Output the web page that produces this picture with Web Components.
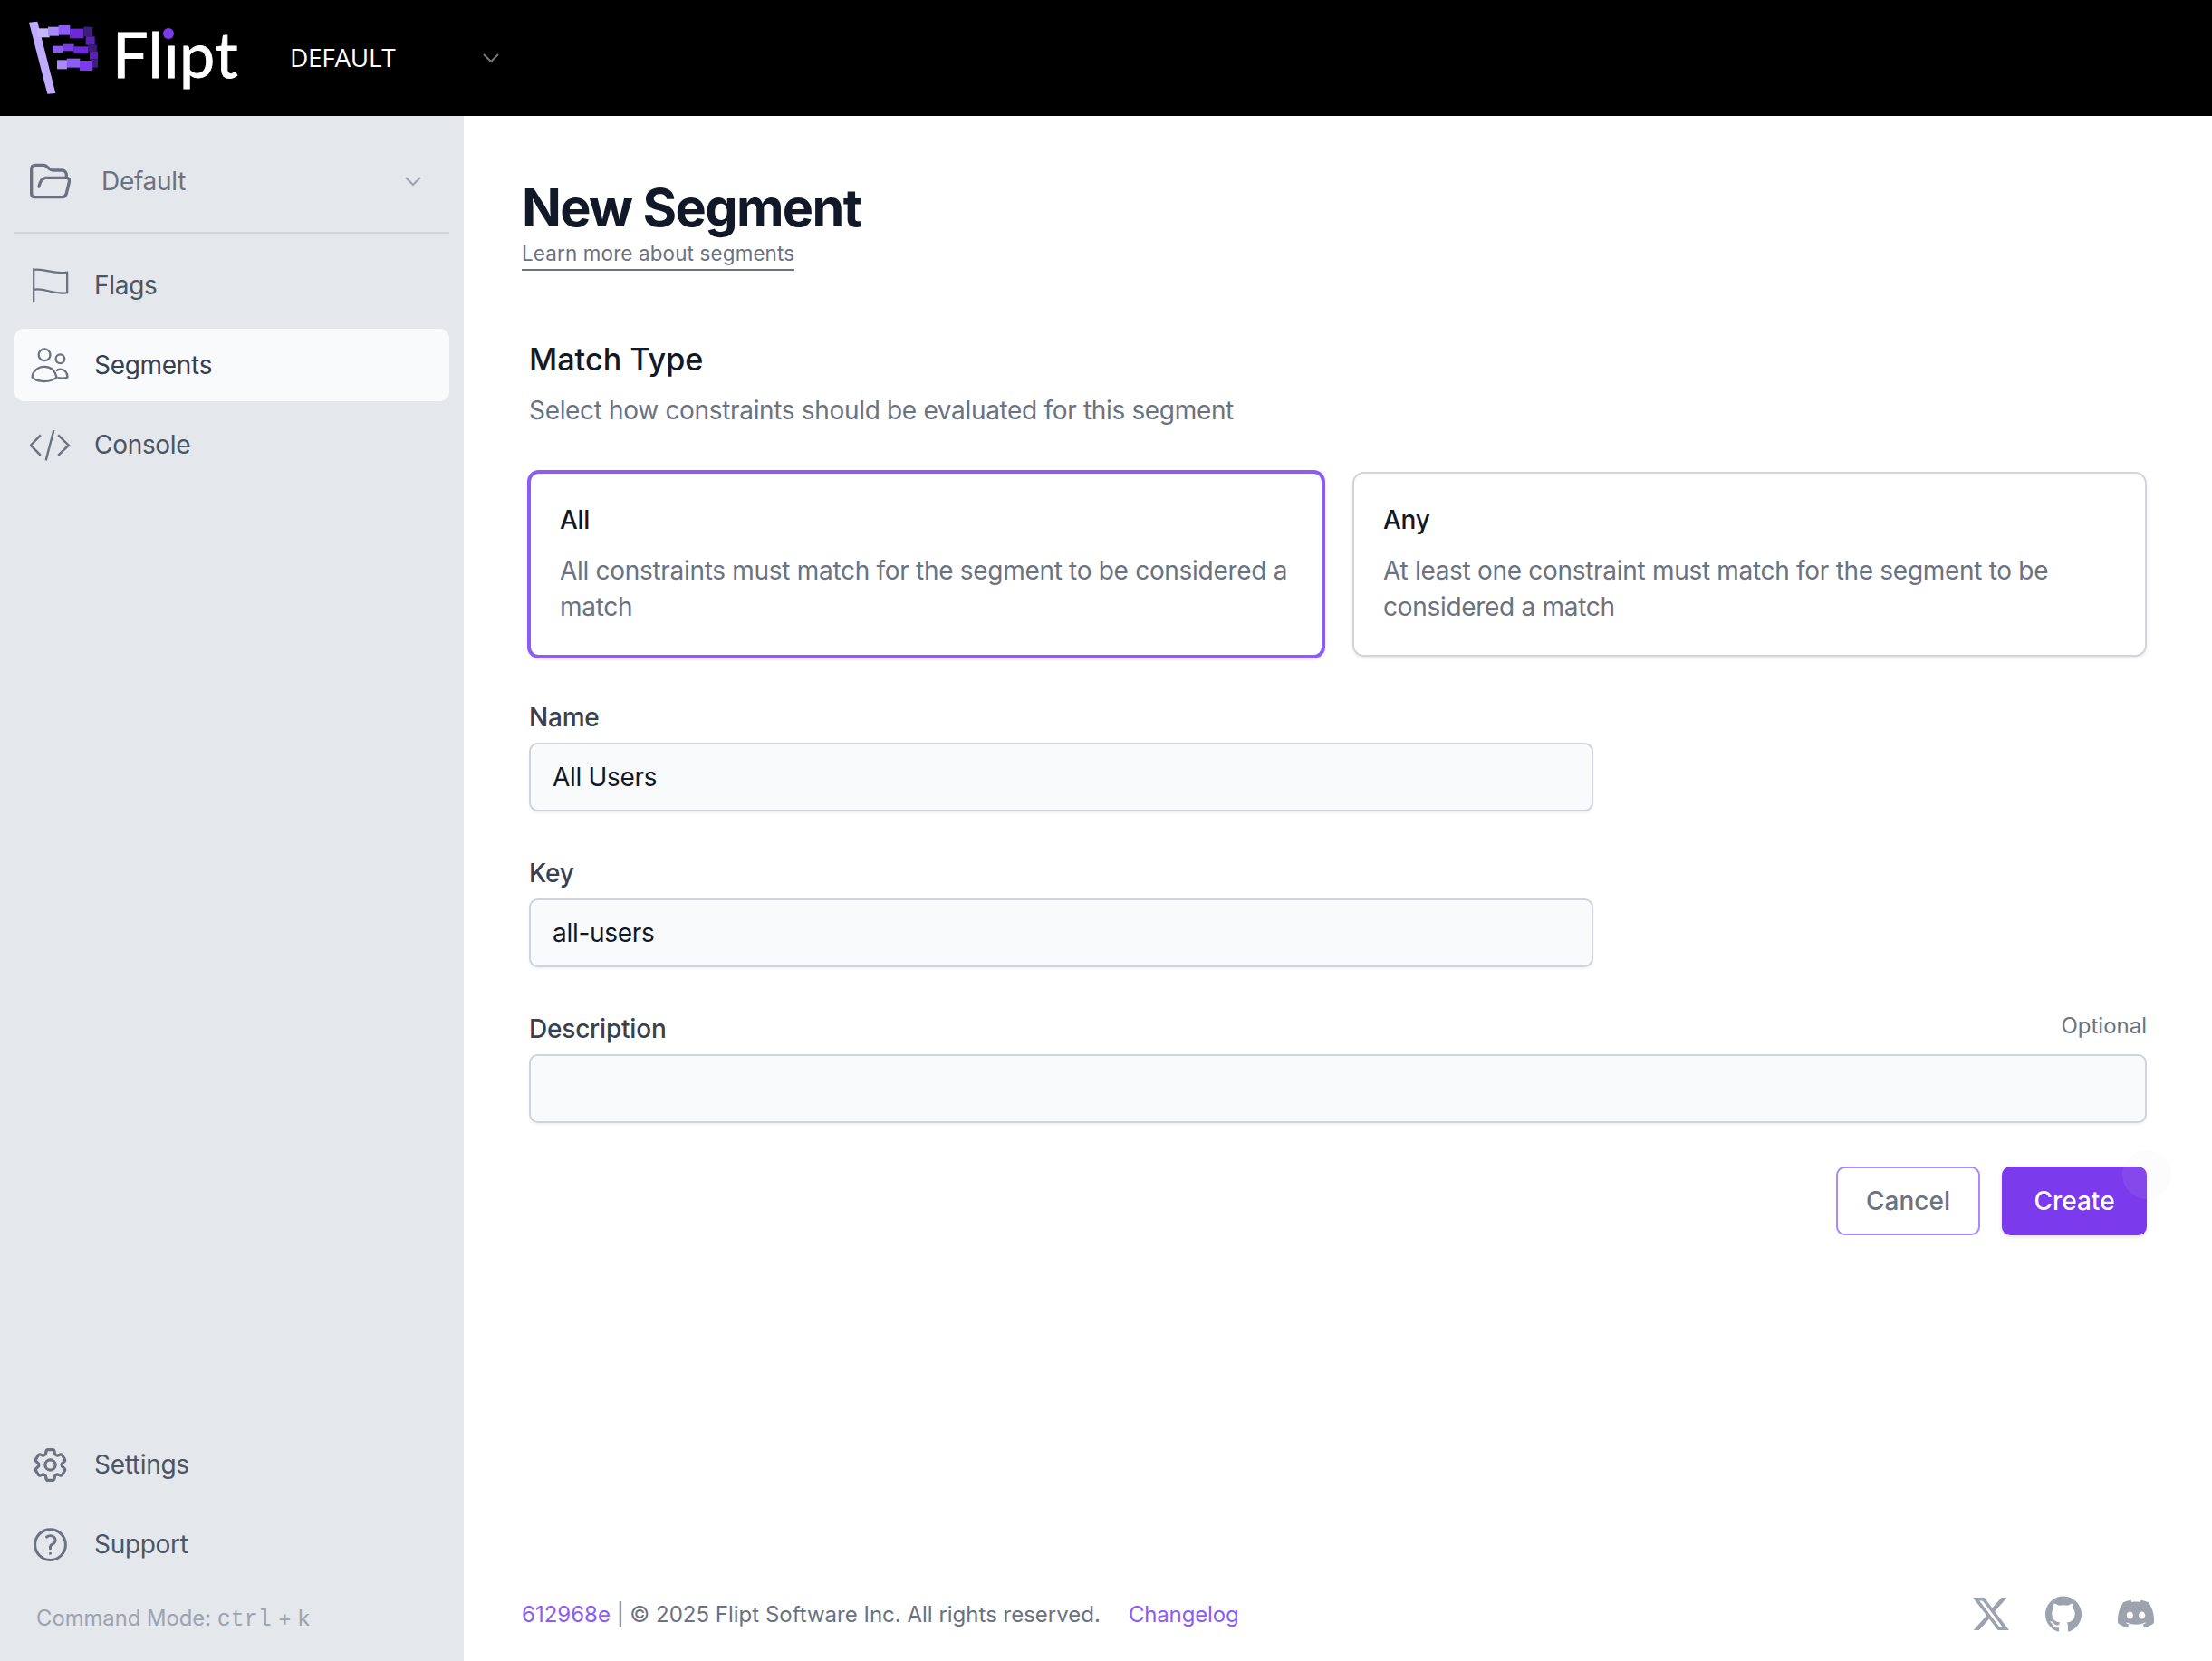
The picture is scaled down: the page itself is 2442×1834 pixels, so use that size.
<!DOCTYPE html>
<html lang="en">
<head>
<meta charset="utf-8">
<title>Flipt - New Segment</title>
<style>
  html, body { margin: 0; height: 100%; background: #fff; }
  body { font-family: Inter, "Liberation Sans", sans-serif; }
</style>
</head>
<body>
<flipt-app>
  <flipt-header slot="header"></flipt-header>
  <flipt-sidebar slot="sidebar">
    <nav-item slot="top" icon="flag">Flags</nav-item>
    <nav-item slot="top" icon="users" active>Segments</nav-item>
    <nav-item slot="top" icon="code">Console</nav-item>
    <nav-item slot="bottom" icon="cog">Settings</nav-item>
    <nav-item slot="bottom" icon="help">Support</nav-item>
  </flipt-sidebar>
  <segment-form slot="main"></segment-form>
  <flipt-footer slot="footer"></flipt-footer>
</flipt-app>

<script>
class FliptApp extends HTMLElement {
  constructor() {
    super();
    this.attachShadow({ mode: "open" });
    this.shadowRoot.innerHTML = `
      <style>
        :host { display: flex; flex-direction: column; height: 1834px; }
        .body { flex: 1; display: flex; min-height: 0; }
        .main { flex: 1; display: flex; flex-direction: column; min-width: 0; }
        .content { flex: 1; }
      </style>
      <slot name="header"></slot>
      <div class="body">
        <slot name="sidebar"></slot>
        <div class="main">
          <div class="content"><slot name="main"></slot></div>
          <slot name="footer"></slot>
        </div>
      </div>
    `;
  }
}

class FliptHeader extends HTMLElement {
  constructor() {
    super();
    this.attachShadow({ mode: "open" });
    this.shadowRoot.innerHTML = `
      <style>
        :host { display: flex; align-items: center; height: 128px; background: #000; color: #fff; padding-left: 28px; }
        .logo { display: block; width: 80px; height: 82px; flex: none; }
        .word { position: relative; margin-left: 16px; width: 138px; flex: none; font: 400 70px/1 Lato, sans-serif; -webkit-text-stroke: .9px #fff; letter-spacing: .6px; margin-top: -10px; }
        .dot { position: absolute; left: 56px; top: 7px; width: 12px; height: 12px; border-radius: 50%; background: #7c3aed; box-shadow: 0 0 0 4px #000; }
        .env { margin-left: 58px; width: 180px; flex: none; font: 400 28px/1 "Open Sans", sans-serif; letter-spacing: -.3px; margin-top: -2px; }
        svg.chev { width: 24px; height: 24px; fill: none; stroke: #777; stroke-width: 2; margin-left: 30px; }
      </style>
      <svg class="logo" viewBox="0 0 80 82"></svg>
      <div class="word">Flipt<span class="dot"></span></div>
      <div class="env">DEFAULT</div>
      <svg class="chev" viewBox="0 0 24 24"><path d="M4 8l8 8 8-8"/></svg>
    `;
    // logo squares: x, y, w, h, colour, in the 100px crop units
    const blocks = [
      [65,65,40,30,"#c4b5fd"],[100,60,36,30,"#a78bfa"],[135,55,38,32,"#8b5cf6"],[172,66,46,32,"#6d28d9"],[218,60,30,32,"#3b1f7a"],
      [225,92,30,28,"#5b21b6"],[232,120,30,22,"#3b1a75"],[238,142,30,26,"#5b21b6"],[245,168,26,27,"#3b1f7a"],
      [115,123,34,22,"#8b5cf6"],[148,117,38,23,"#7c3aed"],[185,125,47,23,"#6d28d9"],
      [130,170,33,30,"#a78bfa"],[162,165,44,30,"#8b5cf6"],[205,172,43,33,"#7c3aed"]
    ];
    const svg = this.shadowRoot.querySelector(".logo");
    svg.innerHTML = `<g transform="scale(.3333) translate(-25,-40)">
      <polygon points="37,45 65,42 125,280 98,282" fill="#bfabff"/>
      ${blocks.map(b => `<rect x="${b[0]}" y="${b[1]}" width="${b[2]}" height="${b[3]}" fill="${b[4]}"/>`).join("")}
    </g>`;
  }
}

const ICONS = {
  flag: `<svg viewBox="100 485 140 135" fill="none" stroke="#6b7280" stroke-width="7" stroke-linejoin="round" stroke-linecap="round"><path d="M113 495v113M113 498c40-6 70 18 115 8v70c-45 10-75-18-115-10"/></svg>`,
  users: `<svg viewBox="100 750 140 135" fill="none" stroke="#6b7280" stroke-width="7"><circle cx="150" cy="781" r="20"/><circle cx="204" cy="795" r="15"/><path d="M108 858c0-18 18-36 42-36s36 14 42 36c-8 8-24 14-42 14s-34-4-42-14z"/><path d="M190 836c4-4 10-6 14-6 14 0 25 12 25 28-10 4-24 4-34 2"/></svg>`,
  code: `<svg viewBox="100 1012 140 135" fill="none" stroke="#6b7280" stroke-width="7.5"><path d="M137 1045l-34 35 34 35M197 1045l36 35-36 35M182 1028l-27 104"/></svg>`,
  cog: `<svg viewBox="0 0 24 24" fill="none" stroke="#6b7280" stroke-width="1.7" stroke-linejoin="round"><path d="M9.594 3.94c.09-.542.56-.94 1.11-.94h2.593c.55 0 1.02.398 1.11.94l.213 1.281c.063.374.313.686.645.87.074.04.147.083.22.127.325.196.72.257 1.075.124l1.217-.456a1.125 1.125 0 0 1 1.37.49l1.296 2.247a1.125 1.125 0 0 1-.26 1.431l-1.003.827c-.293.241-.438.613-.43.992a7.723 7.723 0 0 1 0 .255c-.008.378.137.75.43.991l1.004.827c.424.35.534.955.26 1.43l-1.298 2.247a1.125 1.125 0 0 1-1.369.491l-1.217-.456c-.355-.133-.75-.072-1.076.124a6.47 6.47 0 0 1-.22.128c-.331.183-.581.495-.644.869l-.213 1.281c-.09.543-.56.94-1.11.94h-2.594c-.55 0-1.019-.398-1.11-.94l-.213-1.281c-.062-.374-.312-.686-.644-.87a6.52 6.52 0 0 1-.22-.127c-.325-.196-.72-.257-1.076-.124l-1.217.456a1.125 1.125 0 0 1-1.369-.49l-1.297-2.247a1.125 1.125 0 0 1 .26-1.431l1.004-.827c.292-.24.437-.613.43-.991a6.932 6.932 0 0 1 0-.255c.007-.38-.138-.751-.43-.992l-1.004-.827a1.125 1.125 0 0 1-.26-1.43l1.297-2.247a1.125 1.125 0 0 1 1.37-.491l1.216.456c.356.133.751.072 1.076-.124.072-.044.146-.086.22-.128.332-.183.582-.495.644-.869l.214-1.28Z"/><circle cx="12" cy="12" r="3"/></svg>`,
  help: `<svg viewBox="0 0 24 24" fill="none" stroke="#6b7280" stroke-width="1.6" stroke-linecap="round" stroke-linejoin="round"><path d="M9.879 7.519c1.171-1.025 3.071-1.025 4.242 0 1.172 1.025 1.172 2.687 0 3.712-.203.179-.43.326-.67.442-.745.361-1.45.999-1.45 1.827v.75M21 12a9 9 0 1 1-18 0 9 9 0 0 1 18 0Zm-9 5.25h.008v.008H12v-.008Z"/></svg>`
};

class NavItem extends HTMLElement {
  constructor() {
    super();
    this.attachShadow({ mode: "open" });
    const icon = ICONS[this.getAttribute("icon")];
    this.shadowRoot.innerHTML = `
      <style>
        :host { display: flex; align-items: center; height: 80px; border-radius: 10px; padding-left: 17px; gap: 26px; color: #4b5563; font-size: 28px; letter-spacing: -.3px; }
        :host([active]) { background: #f9fafb; color: #374151; }
        .icon { width: 45px; height: 45px; flex: none; }
        svg { display: block; width: 100%; height: 100%; }
      </style>
      <span class="icon">${icon}</span>
      <slot></slot>
    `;
  }
}

class FliptSidebar extends HTMLElement {
  constructor() {
    super();
    this.attachShadow({ mode: "open" });
    this.shadowRoot.innerHTML = `
      <style>
        :host { display: flex; flex-direction: column; flex: none; box-sizing: border-box; width: 512px; background: #e4e7ec; padding: 0 16px; }
        .ns { display: flex; align-items: center; box-sizing: border-box; height: 130px; padding: 16px 28px 0 17px; border-bottom: 2px solid #d1d5db; color: #6b7280; font-size: 28px; letter-spacing: -.3px; }
        .ns svg.folder { width: 45px; height: 40px; flex: none; }
        .ns span { margin-left: 34px; flex: 1; }
        .ns svg.chev { width: 24px; height: 24px; fill: none; stroke: #9ca3af; stroke-width: 2; }
        .top { display: flex; flex-direction: column; gap: 8px; margin-top: 17px; }
        .bottom { display: flex; flex-direction: column; gap: 8px; margin-top: auto; }
        .cmd { color: #9ca3af; font-size: 23.8px; margin: 26px 0 29px 24px; line-height: 32px; }
        .cmd code { font-family: "Liberation Mono", monospace; font-size: 25px; }
      </style>
      <div class="ns">
        <svg class="folder" viewBox="100 148 135 118" fill="none" stroke="#6b7280" stroke-width="10" stroke-linejoin="round" stroke-linecap="round">
          <path d="M105 168c0-9 5-14 13-14h28c6 0 9 3 13 7l5 5c3 3 6 5 12 5h30c9 0 15 7 15 16v8M130 225c3-14 11-28 22-29h68c9 0 12 6 10 14l-9 38c-2 8-8 12-15 12H116c-7 0-11-4-11-12V168"/>
        </svg>
        <span>Default</span>
        <svg class="chev" viewBox="0 0 24 24"><path d="M4 8l8 8 8-8"/></svg>
      </div>
      <div class="top"><slot name="top"></slot></div>
      <div class="bottom"><slot name="bottom"></slot></div>
      <div class="cmd">Command Mode: <code>ctrl</code> + k</div>
    `;
  }
}

class MatchCard extends HTMLElement {
  constructor() {
    super();
    this.attachShadow({ mode: "open" });
    this.shadowRoot.innerHTML = `
      <style>
        :host { display: block; box-sizing: border-box; height: 204px; background: #fff; border: 2px solid #d1d5db; border-radius: 12.8px; padding: 33px 24px 0 32px; box-shadow: 0 2px 3px rgba(0,0,0,.08); letter-spacing: -.3px; }
        :host([selected]) { border: 4px solid #8b5cf6; height: 208px; margin: -2px; padding: 33px 22px 0 32px; }
        .title { font-size: 28px; line-height: 36px; font-weight: 500; color: #111827; }
        .text { font-size: 28px; line-height: 40px; color: #6b7280; margin-top: 18px; }
      </style>
      <div class="title">${this.getAttribute("title")}</div>
      <div class="text"><slot></slot></div>
    `;
  }
}

class FormField extends HTMLElement {
  constructor() {
    super();
    this.attachShadow({ mode: "open" });
    const optional = this.hasAttribute("optional") ? `<span class="opt">Optional</span>` : "";
    this.shadowRoot.innerHTML = `
      <style>
        :host { display: block; }
        .head { display: flex; justify-content: space-between; height: 40px; line-height: 40px; color: #374151; font-size: 28px; font-weight: 500; margin-bottom: 8px; letter-spacing: -.2px; }
        .opt { color: #6b7280; font-size: 24px; font-weight: 400; line-height: 34px; letter-spacing: 0; }
        .box { box-sizing: border-box; height: 76px; padding: 0 24px; display: flex; align-items: center; background: #f9fafb; border: 2px solid #d1d5db; border-radius: 9.6px; color: #111827; font-size: 28px; letter-spacing: -.3px; box-shadow: 0 2px 3px rgba(0,0,0,.05); }
      </style>
      <div class="head"><span>${this.getAttribute("label")}</span>${optional}</div>
      <div class="box"><slot></slot></div>
    `;
  }
}

class SegmentForm extends HTMLElement {
  constructor() {
    super();
    this.attachShadow({ mode: "open" });
    this.shadowRoot.innerHTML = `
      <style>
        :host { display: block; padding: 67px 72px 0 64px; }
        h1 { margin: 0; font-size: 57.6px; line-height: 68px; font-weight: 700; letter-spacing: -1.65px; color: #111827; }
        a.learn { display: inline-block; color: #6b7280; font-size: 22.4px; letter-spacing: .16px; line-height: 32px; border-bottom: 2px solid #6b7280; padding-bottom: 1px; margin-top: 1px; text-decoration: none; }
        .form { padding-left: 8px; }
        h2 { margin: 76px 0 0; font-size: 34.2px; line-height: 44px; font-weight: 500; color: #111827; }
        .sub { margin: 14px 0 0; font-size: 28px; letter-spacing: -.33px; line-height: 40px; color: #6b7280; }
        .cards { display: grid; grid-template-columns: 1fr 1fr; gap: 32px; margin-top: 48px; }
        form-field { margin-top: 48px; }
        form-field.narrow { width: 1175px; }
        form-field.first { margin-top: 47px; }
        .actions { display: flex; justify-content: flex-end; gap: 24px; margin-top: 48px; }
        button { box-sizing: border-box; height: 76px; border-radius: 9.6px; font: 500 28px Inter, sans-serif; padding: 0; }
        .cancel { width: 159px; background: #fff; border: 2px solid #a78bfa; color: #6b7280; }
        .create { position: relative; width: 160px; background: #7c3aed; border: none; color: #fff; box-shadow: 0 2px 4px rgba(0,0,0,.12); }
        .ripple { position: absolute; left: 133px; top: -18px; width: 54px; height: 54px; border-radius: 50%; background: rgba(225,225,225,.09); }
      </style>
      <h1>New Segment</h1>
      <a class="learn" href="#">Learn more about segments</a>
      <div class="form">
        <h2>Match Type</h2>
        <p class="sub">Select how constraints should be evaluated for this segment</p>
        <div class="cards">
          <match-card title="All" selected>All constraints must match for the segment to be considered a match</match-card>
          <match-card title="Any">At least one constraint must match for the segment to be considered a match</match-card>
        </div>
        <form-field class="narrow first" label="Name">All Users</form-field>
        <form-field class="narrow" label="Key">all-users</form-field>
        <form-field label="Description" optional></form-field>
        <div class="actions">
          <button class="cancel">Cancel</button>
          <button class="create">Create<span class="ripple"></span></button>
        </div>
      </div>
    `;
  }
}

class FliptFooter extends HTMLElement {
  constructor() {
    super();
    this.attachShadow({ mode: "open" });
    this.shadowRoot.innerHTML = `
      <style>
        :host { display: flex; align-items: center; height: 40px; padding: 0 64px 32px 64px; color: #6b7280; font-size: 24px; }
        a { color: #8b5cf6; text-decoration: none; }
        .changelog { margin-left: 31px; letter-spacing: -.15px; }
        .icons { margin-left: auto; display: flex; align-items: center; gap: 40px; }
        svg { display: block; width: 40px; height: 40px; fill: #9ca3af; }
      </style>
      <a href="#">612968e</a>&nbsp;| © 2025 Flipt Software Inc. All rights reserved.
      <a class="changelog" href="#">Changelog</a>
      <div class="icons">
        <svg viewBox="0 0 24 24"><path fill-rule="evenodd" d="M18.901 1.153h3.68l-8.04 9.19L24 22.846h-7.406l-5.8-7.584-6.638 7.584H.474l8.6-9.83L0 1.154h7.594l5.243 6.932ZM17.61 20.644h2.039L6.486 3.24H4.298Z"/></svg>
        <svg viewBox="0 0 24 24"><path d="M12 .297c-6.63 0-12 5.373-12 12 0 5.303 3.438 9.8 8.205 11.385.6.113.82-.258.82-.577 0-.285-.01-1.04-.015-2.04-3.338.724-4.042-1.61-4.042-1.61C4.422 18.07 3.633 17.7 3.633 17.7c-1.087-.744.084-.729.084-.729 1.205.084 1.838 1.236 1.838 1.236 1.07 1.835 2.809 1.305 3.495.998.108-.776.417-1.305.76-1.605-2.665-.3-5.466-1.332-5.466-5.93 0-1.31.465-2.38 1.235-3.22-.135-.303-.54-1.523.105-3.176 0 0 1.005-.322 3.3 1.23.96-.267 1.98-.399 3-.405 1.02.006 2.04.138 3 .405 2.28-1.552 3.285-1.23 3.285-1.23.645 1.653.24 2.873.12 3.176.765.84 1.23 1.91 1.23 3.22 0 4.61-2.805 5.625-5.475 5.92.42.36.81 1.096.81 2.22 0 1.606-.015 2.896-.015 3.286 0 .315.21.69.825.57C20.565 22.092 24 17.592 24 12.297c0-6.627-5.373-12-12-12"/></svg>
        <svg viewBox="0 0 24 24"><path d="M20.317 4.3698a19.7913 19.7913 0 00-4.8851-1.5152.0741.0741 0 00-.0785.0371c-.211.3753-.4447.8648-.6083 1.2495-1.8447-.2762-3.68-.2762-5.4868 0-.1636-.3933-.4058-.8742-.6177-1.2495a.077.077 0 00-.0785-.037 19.7363 19.7363 0 00-4.8852 1.515.0699.0699 0 00-.0321.0277C.5334 9.0458-.319 13.5799.0992 18.0578a.0824.0824 0 00.0312.0561c2.0528 1.5076 4.0413 2.4228 5.9929 3.0294a.0777.0777 0 00.0842-.0276c.4616-.6304.8731-1.2952 1.226-1.9942a.076.076 0 00-.0416-.1057c-.6528-.2476-1.2743-.5495-1.8722-.8923a.077.077 0 01-.0076-.1277c.1258-.0943.2517-.1923.3718-.2914a.0743.0743 0 01.0776-.0105c3.9278 1.7933 8.18 1.7933 12.0614 0a.0739.0739 0 01.0785.0095c.1202.099.246.1981.3728.2924a.077.077 0 01-.0066.1276 12.2986 12.2986 0 01-1.873.8914.0766.0766 0 00-.0407.1067c.3604.698.7719 1.3628 1.225 1.9932a.076.076 0 00.0842.0286c1.961-.6067 3.9495-1.5219 6.0023-3.0294a.077.077 0 00.0313-.0552c.5004-5.177-.8382-9.6739-3.5485-13.6604a.061.061 0 00-.0312-.0286zM8.02 15.3312c-1.1825 0-2.1569-1.0857-2.1569-2.419 0-1.3332.9555-2.4189 2.157-2.4189 1.2108 0 2.1757 1.0952 2.1568 2.419 0 1.3332-.9555 2.4189-2.1569 2.4189zm7.9748 0c-1.1825 0-2.1569-1.0857-2.1569-2.419 0-1.3332.9554-2.4189 2.1569-2.4189 1.2108 0 2.1757 1.0952 2.1568 2.419 0 1.3332-.946 2.4189-2.1568 2.4189Z"/></svg>
      </div>
    `;
  }
}

customElements.define("flipt-app", FliptApp);
customElements.define("flipt-header", FliptHeader);
customElements.define("nav-item", NavItem);
customElements.define("flipt-sidebar", FliptSidebar);
customElements.define("match-card", MatchCard);
customElements.define("form-field", FormField);
customElements.define("segment-form", SegmentForm);
customElements.define("flipt-footer", FliptFooter);
</script>
</body>
</html>
